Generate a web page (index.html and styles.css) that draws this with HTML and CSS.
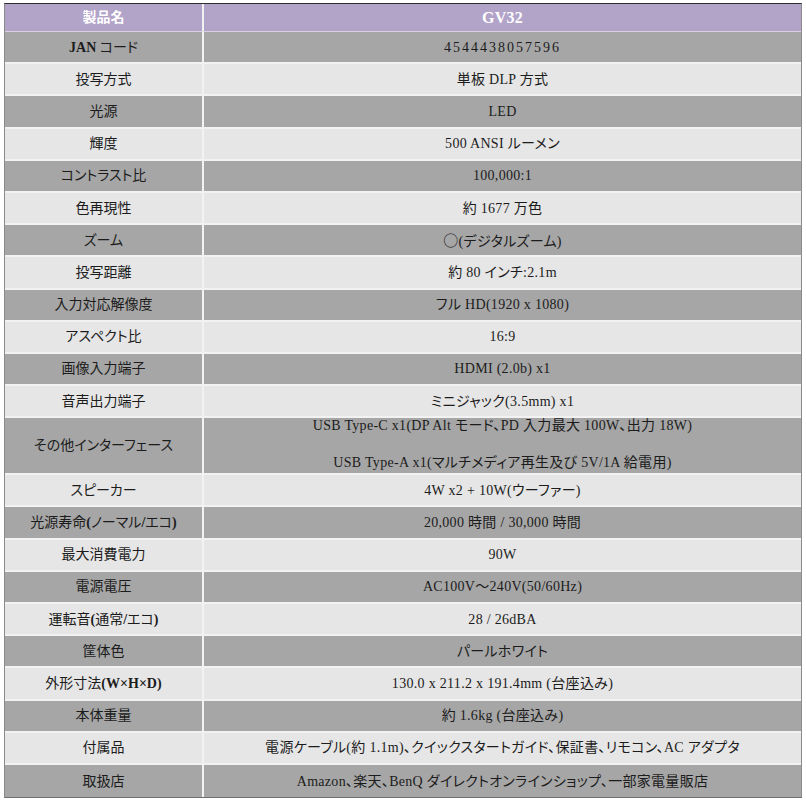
FILE: index.html
```html
<!DOCTYPE html>
<html lang="ja">
<head>
<meta charset="utf-8">
<title>GV32 仕様</title>
<link rel="stylesheet" href="styles.css">
</head>
<body>
<table class="spec">
  <thead>
    <tr><th class="lab">製品名</th><th class="val">GV32</th></tr>
  </thead>
  <tbody>
    <tr><td class="lab"><b class="lat">JAN</b> コード</td><td class="val num">4544438057596</td></tr>
    <tr><td class="lab">投写方式</td><td class="val">単板 DLP 方式</td></tr>
    <tr><td class="lab">光源</td><td class="val">LED</td></tr>
    <tr><td class="lab">輝度</td><td class="val">500 ANSI ルーメン</td></tr>
    <tr><td class="lab">コントラスト比</td><td class="val">100,000:1</td></tr>
    <tr><td class="lab">色再現性</td><td class="val">約 1677 万色</td></tr>
    <tr><td class="lab">ズーム</td><td class="val"><span class="cjk">○</span>(デジタルズーム)</td></tr>
    <tr><td class="lab">投写距離</td><td class="val">約 80 インチ:2.1m</td></tr>
    <tr><td class="lab">入力対応解像度</td><td class="val">フル HD(1920 x 1080)</td></tr>
    <tr><td class="lab">アスペクト比</td><td class="val">16:9</td></tr>
    <tr><td class="lab">画像入力端子</td><td class="val">HDMI (2.0b) x1</td></tr>
    <tr><td class="lab">音声出力端子</td><td class="val">ミニジャック(3.5mm) x1</td></tr>
    <tr class="double"><td class="lab">その他インターフェース</td><td class="val multi"><div class="line l1">USB Type-C x1(DP Alt モード、PD 入力最大 100W、出力 18W)</div><div class="line l2">USB Type-A x1(マルチメディア再生及び 5V/1A 給電用)</div></td></tr>
    <tr><td class="lab">スピーカー</td><td class="val">4W x2 + 10W(ウーファー)</td></tr>
    <tr><td class="lab">光源寿命<b class="lat">(</b>ノーマル<b class="lat">/</b>エコ<b class="lat">)</b></td><td class="val">20,000 時間 / 30,000 時間</td></tr>
    <tr><td class="lab">最大消費電力</td><td class="val">90W</td></tr>
    <tr><td class="lab">電源電圧</td><td class="val">AC100V～240V(50/60Hz)</td></tr>
    <tr><td class="lab">運転音<b class="lat">(</b>通常<b class="lat">/</b>エコ<b class="lat">)</b></td><td class="val">28 / 26dBA</td></tr>
    <tr><td class="lab">筐体色</td><td class="val">パールホワイト</td></tr>
    <tr><td class="lab">外形寸法<b class="lat">(W×H×D)</b></td><td class="val">130.0 x 211.2 x 191.4mm (台座込み)</td></tr>
    <tr><td class="lab">本体重量</td><td class="val">約 1.6kg (台座込み)</td></tr>
    <tr><td class="lab">付属品</td><td class="val">電源ケーブル(約 1.1m)、クイックスタートガイド、保証書、リモコン、AC アダプタ</td></tr>
    <tr><td class="lab">取扱店</td><td class="val">Amazon、楽天、BenQ ダイレクトオンラインショップ、一部家電量販店</td></tr>
  </tbody>
</table>
</body>
</html>
```
FILE: styles.css
```css
html, body {
  background: #ffffff;
}
body {
  margin: 3px 0 0 4px;
  font-family: "Liberation Serif", "Noto Sans CJK JP", serif;
  color: #1c1c1c;
  font-feature-settings: "palt";
}
.spec {
  width: 798px;
  border-collapse: separate;
  border-spacing: 0;
  border-top: 1px solid #2e2e2e;
  border-left: 1px solid #8a8a8a;
  border-right: 1px solid #8a8a8a;
  border-bottom: 1px solid #6e6e6e;
  table-layout: fixed;
}
.spec th,
.spec td {
  box-sizing: border-box;
  padding: 1px 0 0;
  text-align: center;
  vertical-align: middle;
  line-height: 18px;
  border-bottom: 2px solid #f2f2f2;
}
.spec .lab {
  width: 199px;
  border-right: 2px solid #f2f2f2;
  font-size: 14px;
}
.spec thead th {
  height: 28px;
  padding-top: 0;
  background: #b2a3c9;
  color: #ffffff;
  font-size: 16px;
  font-weight: bold;
  border-bottom: 1px solid #d8d0e2;
}
.spec tbody td {
  height: 32.2px;
}
.spec tbody tr:nth-child(odd) td {
  background: #a6a6a6;
}
.spec tbody tr:nth-child(even) td {
  background: #e6e6e6;
}
.spec tbody tr:last-child td {
  border-bottom: none;
}
.val {
  font-size: 14px;
  letter-spacing: 0.3px;
}
.num {
  letter-spacing: 2px;
}
.lat {
  font-weight: bold;
}
.cjk {
  font-family: "Noto Sans CJK JP", sans-serif;
  font-size: 15px;
}
.spec tbody tr.double td {
  height: 57px;
}
.spec tbody tr.double td.multi {
  vertical-align: top;
  padding-top: 0;
}
.line {
  line-height: 16px;
}
.l2 {
  margin-top: 21px;
}
```
